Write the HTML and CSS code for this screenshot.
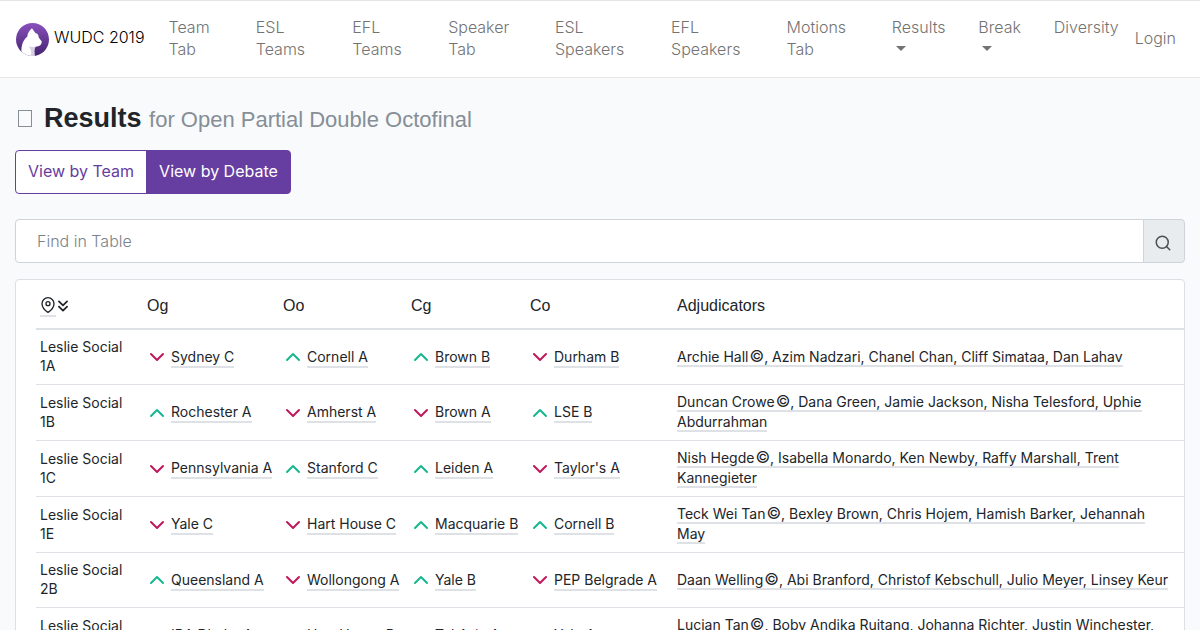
FILE: index.html
```html
<!DOCTYPE html>
<html lang="en">
<head>
    <meta charset="UTF-8">
    <meta name="viewport" content="width=device-width, initial-scale=1.0">
    <title>WUDC 2019 | Results</title>
    <link rel="stylesheet" href="styles.css">
</head>
<body>
    <svg class="sprite" aria-hidden="true">
        <symbol id="up" viewBox="0 0 24 24"><polyline points="18 15 12 9 6 15"/></symbol>
        <symbol id="down" viewBox="0 0 24 24"><polyline points="6 9 12 15 18 9"/></symbol>
    </svg>

    <nav class="navbar">
        <a href="#" class="brand">
            <svg class="logo" viewBox="0 0 32 32" aria-hidden="true">
                <defs>
                    <linearGradient id="purple" x1="0" y1="0" x2="0" y2="1">
                        <stop offset="0" stop-color="#8a50bd"/>
                        <stop offset="1" stop-color="#43236f"/>
                    </linearGradient>
                    <clipPath id="round"><circle cx="16" cy="16" r="16"/></clipPath>
                </defs>
                <circle cx="16" cy="16" r="16" fill="url(#purple)"/>
                <g clip-path="url(#round)">
                    <path fill="#fff" d="M15.500 5 L19 10 C21 10 22 12 22 14 L25 18 C25 21 23 23 19 23 C17 25 18 28 18 32 L6 32 C4 25 6 17 11 13 C11 10 13 7 15.500 5Z"/>
                    <path fill="#d9cfe4" d="M12 22 C15 24 16 23 19 23 C17 26 18 29 18 32 L14 32 C16 28 14 25 12 22Z"/>
                </g>
            </svg>
            <span>WUDC 2019</span>
        </a>
        <ul class="nav-links">
            <li><a href="#">Team Tab</a></li>
            <li><a href="#">ESL Teams</a></li>
            <li><a href="#">EFL Teams</a></li>
            <li><a href="#">Speaker Tab</a></li>
            <li><a href="#">ESL Speakers</a></li>
            <li><a href="#">EFL Speakers</a></li>
            <li><a href="#">Motions Tab</a></li>
            <li><a href="#" class="dropdown">Results </a></li>
            <li><a href="#" class="dropdown">Break </a></li>
            <li><a href="#">Diversity</a></li>
        </ul>
        <a href="#" class="login">Login</a>
    </nav>

    <main class="container">
        <h1><span class="emoji"></span>Results <small>for Open Partial Double Octofinal</small></h1>

        <div class="btn-group">
            <button type="button" class="btn">View by Team</button>
            <button type="button" class="btn active">View by Debate</button>
        </div>

        <form class="search">
            <input type="search" placeholder="Find in Table" aria-label="Find in Table">
            <button type="button" aria-label="Search">
                <svg class="icon" viewBox="0 0 24 24"><circle cx="11" cy="11" r="8"/><line x1="21" y1="21" x2="16.65" y2="16.65"/></svg>
            </button>
        </form>

        <div class="card">
            <table>
                <colgroup>
                    <col class="col-venue">
                    <col class="col-og">
                    <col class="col-oo">
                    <col class="col-cg">
                    <col class="col-co">
                    <col>
                </colgroup>
                <thead>
                    <tr>
                        <th scope="col" aria-label="Venue">
                            <div class="sort">
                                <span class="pin"><svg class="icon" viewBox="0 0 24 24"><path d="M21 10c0 7-9 13-9 13s-9-6-9-13a9 9 0 0 1 18 0z"/><circle cx="12" cy="10" r="3"/></svg></span>
                                <svg class="icon chevrons" viewBox="0 0 24 24"><polyline points="5 13 12 20 19 13"/><polyline points="5 4 12 11 19 4"/></svg>
                            </div>
                        </th>
                        <th scope="col">Og</th>
                        <th scope="col">Oo</th>
                        <th scope="col">Cg</th>
                        <th scope="col">Co</th>
                        <th scope="col">Adjudicators</th>
                    </tr>
                </thead>
                <tbody>
                    <tr>
                        <td>Leslie Social 1A</td>
                        <td><div class="team"><svg class="down"><use href="#down"/></svg><span class="hover">Sydney C</span></div></td>
                        <td><div class="team"><svg class="up"><use href="#up"/></svg><span class="hover">Cornell A</span></div></td>
                        <td><div class="team"><svg class="up"><use href="#up"/></svg><span class="hover">Brown B</span></div></td>
                        <td><div class="team"><svg class="down"><use href="#down"/></svg><span class="hover">Durham B</span></div></td>
                        <td class="adjs"><span class="hover">Archie Hall<i>©</i>, Azim Nadzari, Chanel Chan, Cliff Simataa, Dan Lahav</span></td>
                    </tr>
                    <tr>
                        <td>Leslie Social 1B</td>
                        <td><div class="team"><svg class="up"><use href="#up"/></svg><span class="hover">Rochester A</span></div></td>
                        <td><div class="team"><svg class="down"><use href="#down"/></svg><span class="hover">Amherst A</span></div></td>
                        <td><div class="team"><svg class="down"><use href="#down"/></svg><span class="hover">Brown A</span></div></td>
                        <td><div class="team"><svg class="up"><use href="#up"/></svg><span class="hover">LSE B</span></div></td>
                        <td class="adjs"><span class="hover">Duncan Crowe<i>©</i>, Dana Green, Jamie Jackson, Nisha Telesford, Uphie Abdurrahman</span></td>
                    </tr>
                    <tr>
                        <td>Leslie Social 1C</td>
                        <td><div class="team"><svg class="down"><use href="#down"/></svg><span class="hover">Pennsylvania A</span></div></td>
                        <td><div class="team"><svg class="up"><use href="#up"/></svg><span class="hover">Stanford C</span></div></td>
                        <td><div class="team"><svg class="up"><use href="#up"/></svg><span class="hover">Leiden A</span></div></td>
                        <td><div class="team"><svg class="down"><use href="#down"/></svg><span class="hover">Taylor's A</span></div></td>
                        <td class="adjs"><span class="hover">Nish Hegde<i>©</i>, Isabella Monardo, Ken Newby, Raffy Marshall, Trent Kannegieter</span></td>
                    </tr>
                    <tr>
                        <td>Leslie Social 1E</td>
                        <td><div class="team"><svg class="down"><use href="#down"/></svg><span class="hover">Yale C</span></div></td>
                        <td><div class="team"><svg class="down"><use href="#down"/></svg><span class="hover">Hart House C</span></div></td>
                        <td><div class="team"><svg class="up"><use href="#up"/></svg><span class="hover">Macquarie B</span></div></td>
                        <td><div class="team"><svg class="up"><use href="#up"/></svg><span class="hover">Cornell B</span></div></td>
                        <td class="adjs"><span class="hover">Teck Wei Tan<i>©</i>, Bexley Brown, Chris Hojem, Hamish Barker, Jehannah May</span></td>
                    </tr>
                    <tr>
                        <td>Leslie Social 2B</td>
                        <td><div class="team"><svg class="up"><use href="#up"/></svg><span class="hover">Queensland A</span></div></td>
                        <td><div class="team"><svg class="down"><use href="#down"/></svg><span class="hover">Wollongong A</span></div></td>
                        <td><div class="team"><svg class="up"><use href="#up"/></svg><span class="hover">Yale B</span></div></td>
                        <td><div class="team"><svg class="down"><use href="#down"/></svg><span class="hover">PEP Belgrade A</span></div></td>
                        <td class="adjs"><span class="hover">Daan Welling<i>©</i>, Abi Branford, Christof Kebschull, Julio Meyer, Linsey Keur</span></td>
                    </tr>
                    <tr>
                        <td>Leslie Social 2C</td>
                        <td><div class="team"><svg class="down"><use href="#down"/></svg><span class="hover">IBA Dhaka A</span></div></td>
                        <td><div class="team"><svg class="down"><use href="#down"/></svg><span class="hover">Hart House B</span></div></td>
                        <td><div class="team"><svg class="up"><use href="#up"/></svg><span class="hover">Tel Aviv A</span></div></td>
                        <td><div class="team"><svg class="up"><use href="#up"/></svg><span class="hover">Yale A</span></div></td>
                        <td class="adjs"><span class="hover">Lucian Tan<i>©</i>, Boby Andika Ruitang, Johanna Richter, Justin Winchester, Sharmila Parmanand</span></td>
                    </tr>
                </tbody>
            </table>
        </div>
    </main>
</body>
</html>
```
FILE: styles.css
```css
*{
    box-sizing: border-box;
}
body{
    margin: 0;
    background-color: #f8fafc;
    color: #212529;
    font-family: Inter, "Liberation Sans", sans-serif;
    font-size: 16px;
    line-height: 22px;
}
a{
    color: inherit;
    text-decoration: none;
}
.sprite{
    display: none;
}
.icon{
    fill: none;
    stroke: currentColor;
    stroke-width: 2;
    stroke-linecap: round;
    stroke-linejoin: round;
}

/* navbar */
.navbar{
    display: flex;
    align-items: center;
    padding: 7px 16px 9px;
    background-color: #fff;
    border-top: 1px solid #e6e6e6;
    border-bottom: 1px solid #e6e6e6;
    color: #737373;
    font-weight: 300;
}
.brand{
    display: flex;
    flex-shrink: 0;
    align-items: center;
    gap: 5px;
    margin-right: 16px;
    padding-top: 2px;
    color: #000;
}
.brand span{
    padding-bottom: 5px;
}
.logo{
    width: 33px;
    height: 33px;
}
.nav-links{
    display: flex;
    flex: 1;
    margin: 0;
    padding: 0;
    list-style: none;
}
.nav-links a, .login{
    display: block;
    padding: 8px;
}
.dropdown::after{
    content: "";
    display: inline-block;
    margin-left: 4px;
    vertical-align: 4px;
    border-top: 5px solid;
    border-right: 5px solid transparent;
    border-left: 5px solid transparent;
}

/* page header */
.container{
    padding: 24px 15px;
}
h1{
    margin: 0 0 14px;
    font-family: "Liberation Sans", sans-serif;
    font-size: 27px;
    line-height: 32px;
}
h1 small{
    color: #868e96;
    font-size: 22px;
    font-weight: 400;
}
.emoji{
    display: inline-block;
    width: 14px;
    height: 17px;
    margin: 0 12px 0 3px;
    border: 1px solid #868e96;
}
.btn-group{
    display: flex;
    margin-bottom: 25px;
}
.btn{
    padding: 9px 12px 11px;
    border: 1px solid #663da0;
    border-radius: 4px 0 0 4px;
    background-color: #fff;
    color: #663da0;
    font: inherit;
    cursor: pointer;
}
.btn.active{
    margin-left: -1px;
    border-radius: 0 4px 4px 0;
    background-color: #663da0;
    color: #fff;
}

/* search */
.search{
    display: flex;
    margin-bottom: 16px;
}
.search input{
    flex: 1;
    height: 44px;
    padding: 0 21px;
    border: 1px solid #ced4da;
    border-radius: 4px 0 0 4px;
    background-color: #fff;
    font: inherit;
    font-weight: 300;
}
.search input::placeholder{
    color: #7b838b;
}
.search button{
    display: flex;
    align-items: center;
    justify-content: center;
    width: 42px;
    margin-left: -1px;
    padding: 3px 3px 0 0;
    border: 1px solid #ced4da;
    border-radius: 0 4px 4px 0;
    background-color: #e9ecef;
    color: #495057;
}
.search svg{
    width: 18px;
    height: 18px;
}

/* table */
.card{
    padding-left: 20px;
    border: 1px solid #dcdfe3;
    border-radius: 4px;
    background-color: #fff;
}
table{
    width: 100%;
    table-layout: fixed;
    border-spacing: 0;
    font-size: 14px;
    line-height: 19px;
}
.col-venue{
    width: 107px;
}
.col-og{
    width: 136px;
}
.col-oo{
    width: 128px;
}
.col-cg{
    width: 119px;
}
.col-co{
    width: 147px;
}
th{
    height: 50px;
    padding: 2px 4px 0;
    border-bottom: 2px solid #dee2e6;
    font-family: "Liberation Sans", sans-serif;
    font-size: 16px;
    font-weight: 400;
    text-align: left;
}
td{
    padding: 7px 4px 9px;
    border-bottom: 1px solid #dee2e6;
}
td:first-child{
    padding-right: 12px;
}
.sort{
    display: flex;
    align-items: center;
    padding-top: 2px;
}
.pin{
    height: 21px;
    border-bottom: 2px solid #dee2e6;
}
.sort svg{
    display: block;
    width: 16px;
    height: 18px;
}
.sort .chevrons{
    width: 14px;
    height: 14px;
    stroke-width: 3;
}
.team{
    display: flex;
    align-items: center;
    padding-top: 2px;
    white-space: nowrap;
}
.team svg{
    flex-shrink: 0;
    width: 24px;
    height: 24px;
    margin-left: -2px;
    margin-right: 2px;
    fill: none;
    stroke-width: 2;
    stroke-linecap: round;
    stroke-linejoin: round;
}
.up{
    stroke: #17b890;
}
.down{
    stroke: #c2185b;
}
.hover{
    border-bottom: 2px solid #dee2e6;
}
td.adjs{
    padding: 7px 12px 8px 4px;
    line-height: 20px;
}
.adjs i{
    margin-left: 1px;
    font-size: 16px;
    font-style: normal;
    line-height: 1;
}
```
